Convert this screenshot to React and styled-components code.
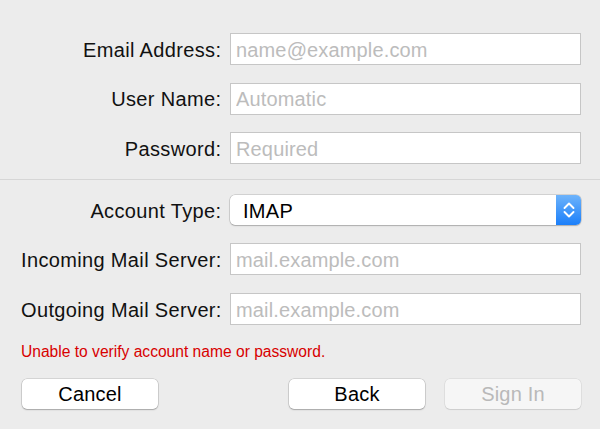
import React from 'react'
import styled, { createGlobalStyle } from 'styled-components'

const GlobalStyle = createGlobalStyle`
  html, body {
    margin: 0;
    padding: 0;
    background: #ececec;
  }
  body {
    font-family: "Liberation Sans", Arial, sans-serif;
    color: #000;
  }
`

const topFields = [
  { label: 'Email Address:', placeholder: 'name@example.com' },
  { label: 'User Name:', placeholder: 'Automatic' },
  { label: 'Password:', placeholder: 'Required' },
]

const serverFields = [
  { label: 'Incoming Mail Server:', placeholder: 'mail.example.com' },
  { label: 'Outgoing Mail Server:', placeholder: 'mail.example.com' },
]

const App = () => {
  return (
    <>
      <GlobalStyle />
      <Sheet>
        <FieldGrid $gap={17.5}>
          {topFields.map((f) => (
            <React.Fragment key={f.label}>
              <Label>{f.label}</Label>
              <TextField placeholder={f.placeholder} />
            </React.Fragment>
          ))}
        </FieldGrid>

        <Separator />

        <FieldGrid $top={15} $gap={18}>
          <Label>Account Type:</Label>
          <Popup>
            <PopupValue>IMAP</PopupValue>
            <Stepper>
              <svg width="14" height="20" viewBox="0 0 14 20">
                <path d="M2.5 8 L7 3.5 L11.5 8" fill="none" stroke="#fff" strokeWidth="1.9" strokeLinecap="round" strokeLinejoin="round" />
                <path d="M2.5 12 L7 16.5 L11.5 12" fill="none" stroke="#fff" strokeWidth="1.9" strokeLinecap="round" strokeLinejoin="round" />
              </svg>
            </Stepper>
          </Popup>
          {serverFields.map((f) => (
            <React.Fragment key={f.label}>
              <Label>{f.label}</Label>
              <TextField placeholder={f.placeholder} />
            </React.Fragment>
          ))}
        </FieldGrid>

        <ErrorText>Unable to verify account name or password.</ErrorText>

        <ButtonRow>
          <PushButton>Cancel</PushButton>
          <Spacer />
          <PushButton>Back</PushButton>
          <PushButton disabled>Sign In</PushButton>
        </ButtonRow>
      </Sheet>
    </>
  )
}

export default App

const Sheet = styled.div`
  width: 600px;
  height: 429px;
  box-sizing: border-box;
  padding: 33px 19px 0 21px;
  overflow: hidden;
`

const FieldGrid = styled.div`
  display: grid;
  grid-template-columns: 200px 351px;
  column-gap: 9px;
  row-gap: ${(p) => p.$gap}px;
  align-items: center;
  margin-top: ${(p) => p.$top || 0}px;
`

const Label = styled.label`
  text-align: right;
  font-size: 20px;
  letter-spacing: 0.35px;
  white-space: nowrap;
  color: #111;
  padding-top: 2px;
  margin-right: -0.35px;
`

const TextField = styled.input`
  box-sizing: border-box;
  height: 32px;
  width: 100%;
  margin: 0;
  padding: 2px 5px 0;
  border: 1px solid #c6c6c6;
  border-radius: 0;
  background: #fff;
  font-family: "Liberation Sans", Arial, sans-serif;
  font-size: 20px;
  letter-spacing: 0.15px;
  color: #000;
  outline: none;

  &::placeholder {
    color: #bcbcbc;
  }
`

const Separator = styled.div`
  height: 1px;
  background: #d6d6d6;
  margin: 15px -19px 0 -21px;
`

const Popup = styled.div`
  display: flex;
  align-items: stretch;
  height: 30px;
  border-radius: 5px;
  background: #fff;
  box-shadow: 0 0 0 0.5px rgba(0, 0, 0, 0.22), 0 1px 1.5px rgba(0, 0, 0, 0.18);
  overflow: hidden;
`

const PopupValue = styled.div`
  flex: 1;
  display: flex;
  align-items: center;
  padding: 2px 0 0 13px;
  font-size: 20px;
  letter-spacing: 0.3px;
`

const Stepper = styled.div`
  width: 25px;
  display: flex;
  align-items: center;
  justify-content: center;
  background: linear-gradient(#6db3fb, #1b7ffa);
`

const ErrorText = styled.div`
  margin-top: 18px;
  font-size: 15.6px;
  line-height: 18px;
  color: #d80000;
`

const ButtonRow = styled.div`
  display: flex;
  gap: 20px;
  margin-top: 18px;
  padding-left: 1px;
`

const Spacer = styled.div`
  flex: 1;
`

const PushButton = styled.button`
  width: 136px;
  height: 30px;
  margin: 0;
  padding: 0;
  border: none;
  border-radius: 5px;
  background: ${(p) => (p.disabled ? '#f6f6f6' : '#fff')};
  box-shadow: ${(p) =>
    p.disabled
      ? '0 0 0 0.5px rgba(0, 0, 0, 0.1), 0 1px 1px rgba(0, 0, 0, 0.08)'
      : '0 0 0 0.5px rgba(0, 0, 0, 0.2), 0 1px 1.5px rgba(0, 0, 0, 0.22)'};
  font-family: "Liberation Sans", Arial, sans-serif;
  font-size: 20px;
  letter-spacing: 0.2px;
  color: ${(p) => (p.disabled ? '#b9b9b9' : '#000')};
`
